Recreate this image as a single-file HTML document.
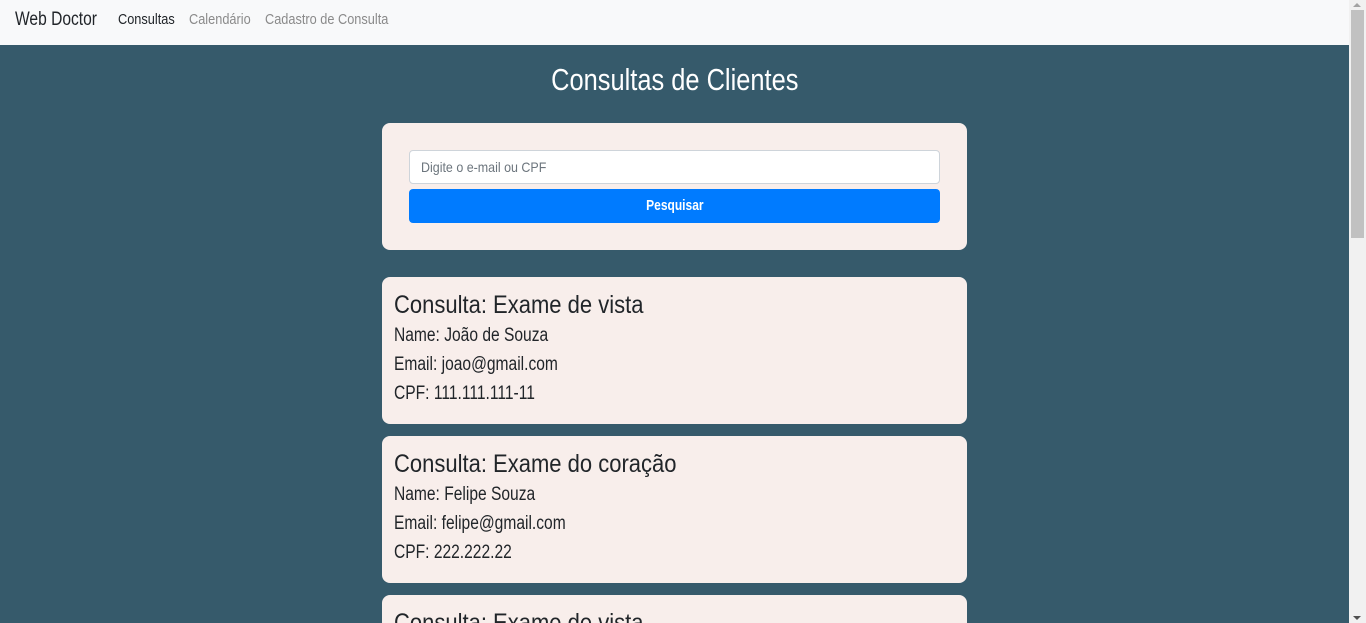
<!DOCTYPE html>
<html><head><meta charset="utf-8"><style>
*{box-sizing:border-box;margin:0;padding:0}
html,body{width:1366px;height:623px;overflow:hidden}
body{font-family:"Liberation Sans Narrow","Liberation Sans",sans-serif;background:#365a6b;position:relative;color:#212529}
.s{display:inline-block;transform-origin:0 0;white-space:nowrap}
.nav{position:absolute;left:0;top:0;width:1349px;height:45px;background:#f8f9fa}
.brand{position:absolute;left:15px;top:9px;font-size:19px;color:#212529}
.nl{position:absolute;top:11px;font-size:15px}
h1{position:absolute;left:0;width:1349px;top:62px;text-align:center;color:#fff;font-weight:normal;font-size:31px}
.card{position:absolute;left:382px;width:585px;background:#f8eeeb;border-radius:8px}
.inp{position:absolute;left:27px;top:27px;width:531px;height:34px;background:#fff;border:1px solid #ced4da;border-radius:4px;font-size:14px;color:#6c757d;padding:8px 11px}
.btn{position:absolute;left:27px;top:66px;width:531px;height:34px;background:#007bff;border-radius:4px;color:#fff;font-size:15px;font-weight:bold;text-align:center;line-height:33px}
.t{position:absolute;left:12px;font-size:25px;top:14px}
.l{position:absolute;left:12px;font-size:19px}
.sb{position:absolute;left:1349px;top:0;width:17px;height:623px;background:#f1f1f1}
.th{position:absolute;left:1351px;top:10px;width:13px;height:228px;background:#c1c1c1}
</style></head><body>
<div class="nav">
<div class="brand"><span class="s" style="transform:scaleX(.82)">Web Doctor</span></div>
<div class="nl" style="left:118px;color:#212529"><span class="s" style="transform:scaleX(.85)">Consultas</span></div>
<div class="nl" style="left:189px;color:#8a8a8a"><span class="s" style="transform:scaleX(.85)">Calendário</span></div>
<div class="nl" style="left:265px;color:#8a8a8a"><span class="s" style="transform:scaleX(.85)">Cadastro de Consulta</span></div>
</div>
<h1><span class="s" style="transform:scaleX(.82);transform-origin:50% 0">Consultas de Clientes</span></h1>
<div class="card" style="top:123px;height:127px">
<div class="inp"><span class="s" style="transform:scaleX(.89)">Digite o e-mail ou CPF</span></div>
<div class="btn"><span class="s" style="transform:scaleX(.8);transform-origin:50% 0">Pesquisar</span></div>
</div>
<div class="card" style="top:277px;height:147px">
<div class="t"><span class="s" style="transform:scaleX(.88)">Consulta: Exame de vista</span></div>
<div class="l" style="top:48px"><span class="s" style="transform:scaleX(.82)">Name: João de Souza</span></div>
<div class="l" style="top:77px"><span class="s" style="transform:scaleX(.82)">Email: joao@gmail.com</span></div>
<div class="l" style="top:106px"><span class="s" style="transform:scaleX(.82)">CPF: 111.111.111-11</span></div>
</div>
<div class="card" style="top:436px;height:147px">
<div class="t"><span class="s" style="transform:scaleX(.88)">Consulta: Exame do coração</span></div>
<div class="l" style="top:48px"><span class="s" style="transform:scaleX(.82)">Name: Felipe Souza</span></div>
<div class="l" style="top:77px"><span class="s" style="transform:scaleX(.82)">Email: felipe@gmail.com</span></div>
<div class="l" style="top:106px"><span class="s" style="transform:scaleX(.82)">CPF: 222.222.22</span></div>
</div>
<div class="card" style="top:595px;height:28px;border-radius:8px 8px 0 0;overflow:hidden">
<div class="t"><span class="s" style="transform:scaleX(.88)">Consulta: Exame de vista</span></div>
</div>
<div class="sb"></div><div class="th"></div>
<div style="position:absolute;left:1353px;top:3px;width:0;height:0;border-left:4px solid transparent;border-right:4px solid transparent;border-bottom:4px solid #a3a3a3"></div>
<div style="position:absolute;left:1353px;top:616px;width:0;height:0;border-left:4px solid transparent;border-right:4px solid transparent;border-top:4px solid #505050"></div>
</body></html>
